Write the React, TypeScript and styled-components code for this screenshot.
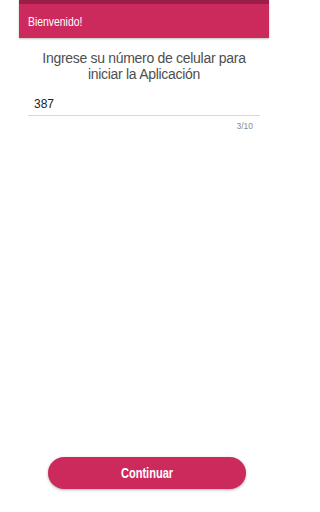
import React from "react";
import styled, { createGlobalStyle } from "styled-components";

const Global = createGlobalStyle`
  html, body { margin: 0; padding: 0; background: #ffffff; }
  body { font-family: "Liberation Sans", Arial, sans-serif; }
  * { box-sizing: border-box; }
`;

const Page = styled.div`
  width: 288px;
  height: 512px;
  display: flex;
  flex-direction: column;
  overflow: hidden;
`;

const Header = styled.header`
  margin: 0 19px;
  height: 38px;
  background: #cc2a5d;
  border-top: 4px solid #9b1e49;
  box-shadow: 0 1px 2px rgba(0, 0, 0, 0.25);
  display: flex;
  align-items: center;
  padding: 0 0 0 9px;
`;

const Title = styled.h1`
  margin: 0;
  display: inline-block;
  font-size: 13px;
  font-weight: 400;
  color: #ffffff;
  transform: scaleX(0.8);
  transform-origin: left center;
`;

const Prompt = styled.p`
  margin: 12px 0 0;
  text-align: center;
  font-size: 14px;
  line-height: 16px;
  letter-spacing: -0.3px;
  color: #4e4e4e;
`;

const Field = styled.div`
  margin: 12px 28px 0;
  display: flex;
  flex-direction: column;
`;

const InputLine = styled.div`
  border-bottom: 1px solid #d9d9d9;
  padding: 2px 0 3px 6px;
  font-size: 12px;
  line-height: 16px;
  color: #222222;
`;

const Counter = styled.div`
  align-self: flex-end;
  margin: 5px 7px 0 0;
  font-size: 8.5px;
  line-height: 10px;
  color: #8a8a8a;
`;

const Spacer = styled.div`
  flex: 1;
`;

const Button = styled.button`
  margin: 0 0 23px 48px;
  width: 198px;
  height: 32px;
  border: none;
  border-radius: 16px;
  background: #cc2a5d;
  color: #ffffff;
  box-shadow: 0 1px 3px rgba(0, 0, 0, 0.3);
  cursor: pointer;
  display: flex;
  align-items: center;
  justify-content: center;
  padding: 0;
`;

const ButtonLabel = styled.span`
  display: inline-block;
  font-family: "Liberation Sans", Arial, sans-serif;
  font-size: 14px;
  font-weight: 700;
  transform: scaleX(0.79);
`;

export default function App() {
  return (
    <>
      <Global />
      <Page>
        <Header>
          <Title>Bienvenido!</Title>
        </Header>
        <Prompt>
          Ingrese su número de celular para
          <br />
          iniciar la Aplicación
        </Prompt>
        <Field>
          <InputLine>387</InputLine>
          <Counter>3/10</Counter>
        </Field>
        <Spacer />
        <Button>
          <ButtonLabel>Continuar</ButtonLabel>
        </Button>
      </Page>
    </>
  );
}
